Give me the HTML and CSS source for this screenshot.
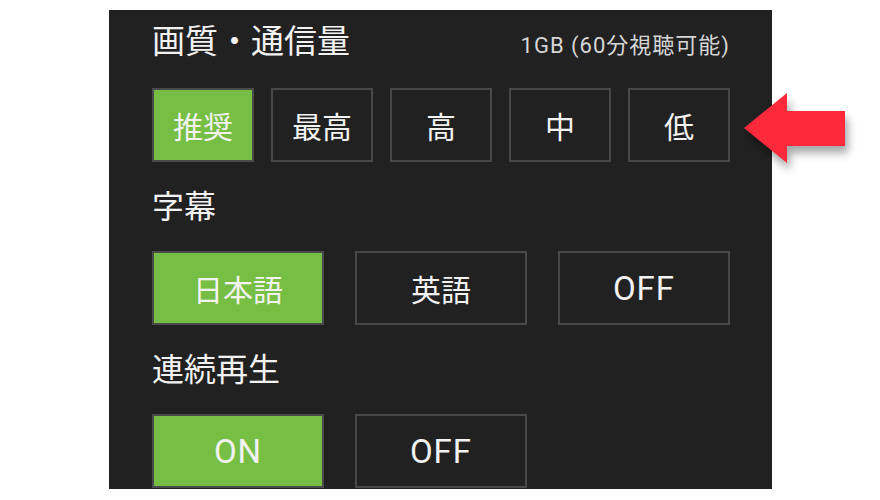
FILE: index.html
```html
<!doctype html>
<html>
<head>
    <meta charset="utf-8">
    <title>再生設定</title>
    <link rel="stylesheet" href="styles.css">
</head>
<body>
    <div class="panel">
        <div class="head">
            <p class="title">画質・通信量</p>
            <p class="note">1GB (60分視聴可能)</p>
        </div>
        <ul class="btns five">
            <li class="on">推奨</li>
            <li>最高</li>
            <li>高</li>
            <li>中</li>
            <li>低</li>
        </ul>

        <p class="label">字幕</p>
        <ul class="btns three">
            <li class="on">日本語</li>
            <li>英語</li>
            <li class="en">OFF</li>
        </ul>

        <p class="label">連続再生</p>
        <ul class="btns three">
            <li class="on en">ON</li>
            <li class="en">OFF</li>
        </ul>
    </div>

    <!-- 注目の矢印 -->
    <svg class="arrow" width="125" height="95" viewBox="0 0 125 95">
        <polygon points="9,43 52,8 52,26 110,26 110,61 52,61 52,78" fill="#fe2a3b"/>
    </svg>
</body>
</html>
```

FILE: styles.css
```css
*{margin:0; padding:0;}
ul{list-style:none;}

body{
    background:#fff;
    font-family:Roboto, "Noto Sans CJK JP", sans-serif;
    color:#f2f2f2;
}
.panel{
    width:663px;
    height:479px;
    margin:10px 0 0 109px;
    padding:0 42px 0 43px;
    box-sizing:border-box;
    background:#212121;
    overflow:hidden;
}
.head{
    display:flex;
    justify-content:space-between;
    align-items:baseline;
    height:78px;
    padding-top:12px;
    box-sizing:border-box;
}
.title{
    font-size:33px;
    line-height:40px;
}
.note{
    font-size:22px;
    letter-spacing:1px;
    color:#d6d6d6;
}
.label{
    font-size:32px;
    line-height:40px;
    padding:25px 0 24px;
}
.btns{
    display:grid;
}
.btns.five{
    grid-template-columns:repeat(5, 1fr);
    column-gap:17px;
}
.btns.three{
    grid-template-columns:repeat(3, 1fr);
    column-gap:31px;
}
.btns li{
    height:74px;
    display:flex;
    align-items:center;
    justify-content:center;
    border:2px solid #484848;
    box-sizing:border-box;
    font-size:30px;
}
.btns li.en{
    font-size:33px;
    letter-spacing:1px;
}
.btns li.on{
    background:#77bf44;
    border-color:#4a4a4a;
}
.arrow{
    position:absolute;
    left:735px;
    top:85px;
    overflow:visible;
    filter:drop-shadow(3px 7px 4px rgba(0,0,0,0.35));
}
```
